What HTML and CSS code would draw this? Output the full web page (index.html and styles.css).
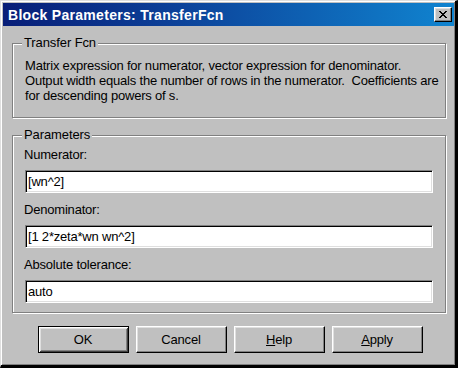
FILE: index.html
```
<!DOCTYPE html>
<html>
<head>
<meta charset="utf-8">
<title>Block Parameters: TransferFcn</title>
<link rel="stylesheet" href="styles.css">
</head>
<body>
<div class="window">
  <div class="titlebar">
    <span class="title">Block Parameters: TransferFcn</span>
    <button class="close" type="button" aria-label="Close">
      <svg width="8" height="7" viewBox="0 0 8 7" shape-rendering="crispEdges"><path fill="#000" d="M0 0h2v1h-2z M6 0h2v1h-2z M1 1h2v1h-2z M5 1h2v1h-2z M2 2h4v1h-4z M3 3h2v1h-2z M2 4h4v1h-4z M1 5h2v1h-2z M5 5h2v1h-2z M0 6h2v1h-2z M6 6h2v1h-2z"/></svg>
    </button>
  </div>
  <div class="body">
    <div class="group g1">
      <div class="legend">Transfer Fcn</div>
      <p class="desc">Matrix expression for numerator, vector expression for denominator.<br>Output width equals the number of rows in the numerator.&nbsp; Coefficients are<br>for descending powers of s.</p>
    </div>
    <div class="group g2">
      <div class="legend">Parameters</div>
      <div class="fields">
        <div class="field">
          <label class="lbl">Numerator:</label>
          <input class="inp" type="text" value="[wn^2]">
        </div>
        <div class="field">
          <label class="lbl">Denominator:</label>
          <input class="inp" type="text" value="[1 2*zeta*wn wn^2]">
        </div>
        <div class="field">
          <label class="lbl">Absolute tolerance:</label>
          <input class="inp" type="text" value="auto">
        </div>
      </div>
    </div>
    <div class="buttons">
      <button class="btn default" type="button">OK</button>
      <button class="btn" type="button">Cancel</button>
      <button class="btn" type="button"><u>H</u>elp</button>
      <button class="btn" type="button"><u>A</u>pply</button>
    </div>
  </div>
</div>
</body>
</html>
```
FILE: styles.css
```
html, body {
  margin: 0;
  padding: 0;
  background: #c0c0c0;
}
body {
  width: 458px;
  height: 368px;
  overflow: hidden;
  font-family: "Liberation Sans", Arial, sans-serif;
  font-size: 13px;
  color: #000;
}
.window {
  box-sizing: border-box;
  width: 458px;
  height: 368px;
  border-style: solid;
  border-width: 1px 3px 3px 1px;
  border-color: #dfdfdf #000 #000 #dfdfdf;
  box-shadow: inset 1px 1px #fff, inset -1px -1px #808080;
  padding: 2px 1px 1px 2px;
  display: flex;
  flex-direction: column;
  background: #c0c0c0;
}
.titlebar {
  height: 23px;
  flex: none;
  display: flex;
  align-items: center;
  background: linear-gradient(90deg, #081e78 0%, #0c3e96 35%, #1084d0 100%);
}
.title {
  flex: 1;
  padding-left: 5px;
  color: #fff;
  font-weight: bold;
  font-size: 14px;
  letter-spacing: 0.3px;
  white-space: nowrap;
}
.close {
  box-sizing: border-box;
  width: 18px;
  height: 15px;
  margin-right: 2px;
  padding: 0;
  border: 1px solid;
  border-color: #fff #000 #000 #fff;
  box-shadow: inset -1px -1px #808080, inset 1px 1px #dfdfdf;
  background: #c0c0c0;
  display: flex;
  align-items: center;
  justify-content: center;
}
.close svg {
  display: block;
}
.body {
  flex: 1;
  padding: 0 8px 0 9px;
  display: flex;
  flex-direction: column;
}
.group {
  border: 1px solid #808080;
  box-shadow: inset 1px 1px #fff, 1px 1px #fff;
  padding: 0 12px;
}
.legend {
  width: fit-content;
  line-height: 16px;
  margin: -9px 0 0 -3px;
  padding: 0 2px;
  background: #c0c0c0;
  letter-spacing: -0.1px;
}
.g1 {
  margin-top: 17px;
  padding-bottom: 14px;
}
.desc {
  margin: 7px 0 0;
  line-height: 15px;
  white-space: nowrap;
  letter-spacing: -0.2px;
}
.g2 {
  margin-top: 17px;
  padding-bottom: 9px;
}
.fields {
  margin-top: 4px;
}
.field + .field {
  margin-top: 9px;
}
.lbl {
  display: block;
  line-height: 16px;
  margin: 0 0 7px -1px;
  letter-spacing: -0.2px;
}
.inp {
  display: block;
  box-sizing: border-box;
  width: 100%;
  height: 23px;
  margin: 0;
  padding: 0 2px;
  border: 1px solid;
  border-color: #808080 #fff #fff #808080;
  box-shadow: inset 1px 1px #000, inset -1px -1px #dfdfdf;
  background: #fff;
  font-family: "Liberation Sans", Arial, sans-serif;
  font-size: 13px;
  letter-spacing: -0.2px;
  color: #000;
  outline: none;
}
.buttons {
  display: flex;
  justify-content: center;
  gap: 7px;
  margin-top: 13px;
  padding-left: 2px;
}
.btn {
  box-sizing: border-box;
  width: 91px;
  height: 27px;
  padding: 0;
  border: 1px solid;
  border-color: #fff #000 #000 #fff;
  box-shadow: inset -1px -1px #808080, inset 1px 1px #dfdfdf;
  background: #c0c0c0;
  font-family: "Liberation Sans", Arial, sans-serif;
  font-size: 13px;
  letter-spacing: -0.2px;
  color: #000;
}
.btn.default {
  border-color: #000;
  box-shadow: inset 1px 1px #fff, inset -1px -1px #404040, inset 2px 2px #dfdfdf, inset -2px -2px #808080;
}
.btn u {
  text-decoration: underline;
}
```
